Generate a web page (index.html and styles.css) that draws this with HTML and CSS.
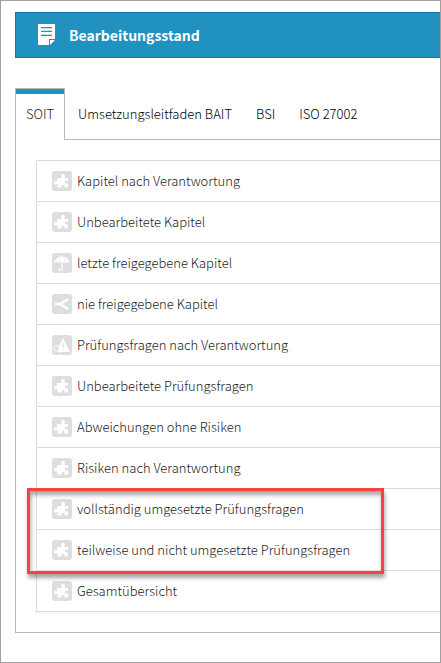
FILE: index.html
```
<!DOCTYPE html>
<html lang="de">
<head>
    <meta charset="UTF-8">
    <meta name="viewport" content="width=device-width, initial-scale=1.0">
    <title>Bearbeitungsstand</title>
    <link rel="stylesheet" href="styles.css">
</head>
<body>
    <!-- Shared icons -->
    <svg class="sprite" aria-hidden="true">
        <symbol id="puzzle" viewBox="0 0 20 20">
            <path fill="#fff" d="M5 7h4.500c.3-.5-.3-1-.3-2.200C9.200 3.500 10 2.800 11 2.800s1.800.7 1.800 2c0 1.200-.6 1.700-.3 2.200H16v3c-.6.300-1-.4-1.800-.4-.8 0-1.300.6-1.300 1.500s.5 1.500 1.300 1.500c.8 0 1.200-.7 1.800-.4v4.300h-3.600c-.4-.5.200-.8.200-1.400 0-.8-.6-1.200-1.500-1.200s-1.500.4-1.500 1.200c0 .6.600.9.200 1.400H5.500v-3.300c-.5-.3-1.300.3-2 .3-.9 0-1.500-.8-1.500-1.800S2.600 9.800 3.500 9.800c.7 0 1 .6 1.500.3z"/>
        </symbol>
        <symbol id="umbrella" viewBox="0 0 20 20">
            <path fill="#fff" d="M2.500 10C3 6 6 3.500 9.500 3.200V2h1v1.200c3.500.3 6.500 2.800 7 6.800-1.500-1-3-1-4 .3-.9-1.200-2-1.500-3.500-.8-1.500-.7-2.600-.4-3.500.8-1-1.300-2.500-1.300-4-.3z"/>
            <path fill="none" stroke="#dedede" stroke-width=".5" d="M9.500 3C7.200 5 6.500 7 6.500 9.800M10.500 3c2.300 2 3 4 3 6.800"/>
            <path fill="none" stroke="#fff" stroke-width="1.300" stroke-linecap="round" d="M10 8v8c0 2-2.800 2-3 .2"/>
        </symbol>
        <symbol id="branch" viewBox="0 0 20 20">
            <path fill="none" stroke="#fff" stroke-width="2.400" d="M16 5.500L8 10l8 5M3 10h6"/>
        </symbol>
        <symbol id="warning" viewBox="0 0 20 20">
            <path fill="#fff" d="M11 3l7 14H7L5.500 13.500z"/>
            <path stroke="#dedede" stroke-width="1.200" d="M11 8v4.500M11 14v1.300"/>
            <circle cx="4.500" cy="13.500" r="2.800" fill="#dedede" stroke="#fff"/>
            <path stroke="#fff" stroke-width="1.200" d="M6.500 15.500l2 2"/>
        </symbol>
    </svg>

    <header class="page-header">
        <svg class="header-icon" viewBox="0 0 18 22" aria-hidden="true">
            <path fill="#fff" d="M0 0h17v15l-6 6H0z"/>
            <path stroke="#2191c0" d="M3 3.500h11M3 7.500h11M3 11.500h11"/>
            <path stroke="#c4e1ef" d="M3 4.500h11M3 6.500h11M3 10.500h11"/>
            <path fill="#2191c0" d="M11 15h6v1l-5 5h-1z"/>
            <path fill="#fff" d="M12 16h5l-5 5z"/>
        </svg>
        <h1>Bearbeitungsstand</h1>
    </header>

    <nav class="tabs">
        <a class="tab active" href="#soit">SOIT</a>
        <a class="tab" href="#bait">Umsetzungsleitfaden BAIT</a>
        <a class="tab" href="#bsi">BSI</a>
        <a class="tab" href="#iso">ISO 27002</a>
    </nav>

    <main class="panel" id="soit">
        <ul class="list">
            <li><a href="#"><svg class="icon"><use href="#puzzle"/></svg>Kapitel nach Verantwortung</a></li>
            <li><a href="#"><svg class="icon"><use href="#puzzle"/></svg>Unbearbeitete Kapitel</a></li>
            <li><a href="#"><svg class="icon"><use href="#umbrella"/></svg>letzte freigegebene Kapitel</a></li>
            <li><a href="#"><svg class="icon"><use href="#branch"/></svg>nie freigegebene Kapitel</a></li>
            <li><a href="#"><svg class="icon"><use href="#warning"/></svg>Prüfungsfragen nach Verantwortung</a></li>
            <li><a href="#"><svg class="icon"><use href="#puzzle"/></svg>Unbearbeitete Prüfungsfragen</a></li>
            <li><a href="#"><svg class="icon"><use href="#puzzle"/></svg>Abweichungen ohne Risiken</a></li>
            <li><a href="#"><svg class="icon"><use href="#puzzle"/></svg>Risiken nach Verantwortung</a></li>
            <li class="marked">
                <a href="#"><svg class="icon"><use href="#puzzle"/></svg>vollständig umgesetzte Prüfungsfragen</a>
                <span class="marker"></span>
            </li>
            <li><a href="#"><svg class="icon"><use href="#puzzle"/></svg>teilweise und nicht umgesetzte Prüfungsfragen</a></li>
            <li><a href="#"><svg class="icon"><use href="#puzzle"/></svg>Gesamtübersicht</a></li>
        </ul>
    </main>
</body>
</html>
```
FILE: styles.css
```
* {
    box-sizing: border-box;
}

body {
    margin: 0;
    min-height: 100vh;
    padding: 11px 0 29px 14px;
    border: 1px solid #a0a0a0;
    background: #fff;
    color: #222;
    font-family: "Noto Sans CJK SC", "Open Sans", sans-serif;
    font-size: 13px;
    font-weight: 300;
    line-height: 20px;
}

a {
    color: inherit;
    text-decoration: none;
}

.sprite {
    display: none;
}

.page-header {
    display: flex;
    align-items: center;
    gap: 13px;
    height: 46px;
    padding: 0 22px;
    border: 1px solid #0f76ae;
    border-right: 0;
    background: #2191c0;
    color: #fff;
}

.page-header h1 {
    margin: 0;
    font-size: 14px;
    font-weight: bold;
}

.header-icon {
    width: 18px;
    height: 22px;
}

/* Tabs */
.tabs {
    display: flex;
    gap: 2px;
    margin-top: 30px;
    border-bottom: 1px solid #b9b9b9;
    color: #000;
    white-space: nowrap;
}

.tab {
    height: 51px;
    padding: 15px 10px;
    border: 1px solid transparent;
    border-bottom: 0;
}

.tab.active {
    height: 52px;
    margin-bottom: -1px;
    border-color: #b9b9b9;
    background: #fff;
    box-shadow: inset 0 5px #2191c0;
    color: #222;
}

.panel {
    padding: 20px 0 20px 20px;
    border: 1px solid #b9b9b9;
    border-width: 0 0 1px 1px;
}

.list {
    margin: 0;
    padding: 0;
    border: 1px solid #dcdcdc;
    border-width: 1px 0 0 1px;
    box-shadow: 0 1px 2px rgba(0, 0, 0, 0.06);
    list-style: none;
}

.list li {
    border-bottom: 1px solid #dcdcdc;
}

.list a {
    display: flex;
    align-items: center;
    gap: 5px;
    height: 40px;
    padding-left: 15px;
}

.icon {
    flex: none;
    width: 20px;
    height: 20px;
    border-radius: 3px;
    background: #dedede;
}

/* Red frame around two rows */
.marked {
    position: relative;
}

.marker {
    position: absolute;
    top: -1px;
    left: -10px;
    width: 357px;
    height: 86px;
    border: 3px solid #ff4040;
    box-shadow: 1px 4px 4px rgba(0, 0, 0, 0.35), inset 1px 4px 4px rgba(0, 0, 0, 0.35);
    pointer-events: none;
}
```
